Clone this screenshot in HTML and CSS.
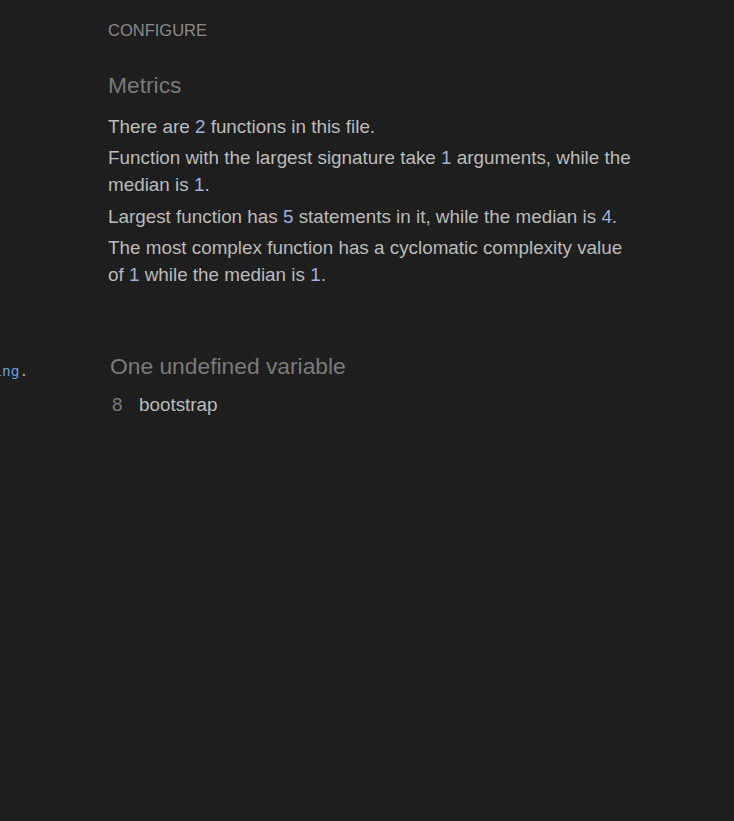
FILE: index.html
```html
<!DOCTYPE html>
<html>
<head>
<meta charset="utf-8">
<link rel="stylesheet" href="styles.css">
</head>
<body>
<div class="page">
  <div class="code-col">
    <div class="code-line"><span class="kw">string</span><span class="punc">.</span></div>
  </div>
  <div class="main">
    <div class="configure">CONFIGURE</div>
    <h2 class="title">Metrics</h2>
    <p class="stat">There are <span class="num">2</span> functions in this file.</p>
    <p class="stat">Function with the largest signature take <span class="num">1</span> arguments, while the median is <span class="num">1</span>.</p>
    <p class="stat">Largest function has <span class="num">5</span> statements in it, while the median is <span class="num">4</span>.</p>
    <p class="stat">The most complex function has a cyclomatic complexity value of <span class="num">1</span> while the median is <span class="num">1</span>.</p>
    <div class="undef">
      <h2 class="title">One undefined variable</h2>
      <div class="var-row"><span class="line-no">8</span><span class="var-name">bootstrap</span></div>
    </div>
  </div>
</div>
</body>
</html>
```

FILE: styles.css
```css
html, body {
  margin: 0;
  padding: 0;
  background: #1e1e1e;
  height: 100%;
}
body {
  font-family: "Liberation Sans", Arial, sans-serif;
  color: #bbbbbb;
}
.page {
  display: flex;
  min-height: 821px;
}
.code-col {
  width: 108px;
  flex: none;
  overflow: hidden;
}
.code-line {
  margin-top: 362px;
  margin-left: -33px;
  font-family: "DejaVu Sans Mono", monospace;
  font-size: 14.5px;
  line-height: 19px;
  white-space: nowrap;
}
.kw { color: #6a9fd8; }
.punc { color: #b0b0b0; }
.main {
  width: 528px;
  padding-top: 21px;
}
.configure {
  font-size: 16.5px;
  line-height: 18px;
  color: #8a8a8a;
}
.title {
  font-size: 22.8px;
  font-weight: normal;
  line-height: 28px;
  color: #7a7a7a;
  margin: 0;
}
.main > .title {
  margin-top: 32px;
  margin-bottom: 14px;
}
.stat {
  font-size: 18.85px;
  line-height: 27px;
  margin: 0 0 4.3px;
}
.num { color: #9db0da; }
.undef {
  margin-top: 64px;
  margin-left: 2px;
}
.undef .title {
  margin-bottom: 13px;
}
.var-row {
  display: flex;
  font-size: 18.85px;
  line-height: 24px;
  padding-left: 2px;
}
.line-no {
  color: #7a7a7a;
  width: 27px;
}
.var-name { color: #bbbbbb; }
```
